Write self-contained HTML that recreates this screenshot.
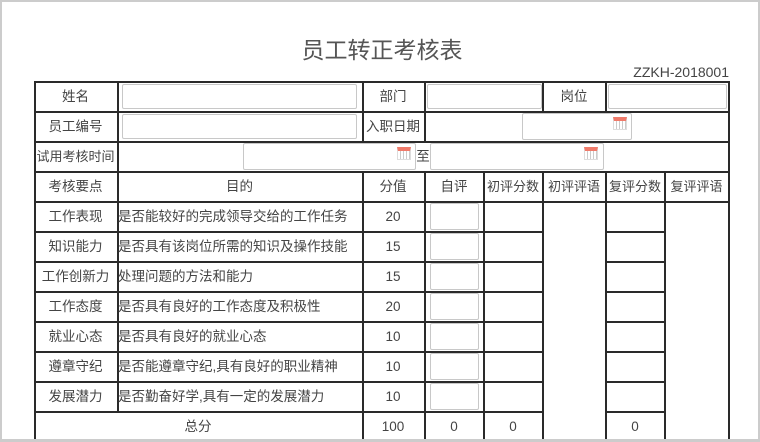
<!DOCTYPE html>
<html><head><meta charset="utf-8"><style>
*{margin:0;padding:0;box-sizing:border-box}
body{width:760px;height:441px;overflow:hidden;background:#ccc;font-family:"Liberation Sans","Noto Sans CJK SC",sans-serif;color:#444;position:relative}
#pg{position:absolute;left:2px;top:2px;width:756px;height:437px;background:#fff}
.h,.v{position:absolute;background:#2a2a2a}
.h{height:1.5px}.v{width:1.5px}
.t{position:absolute;font-size:13.5px;line-height:30px;height:30px;padding-top:1px;text-align:center;white-space:nowrap}
.l{text-align:left}
.in{position:absolute;border:1.5px solid #c8c8c8;border-radius:2px;background:#fff}
.cal{position:absolute;width:14px;height:13px;border:1px solid #ddd;border-top:4px solid #f07a6a;background:repeating-linear-gradient(90deg,#fff 0 2px,#ccc 2px 3px)}
</style></head><body><div id="pg"></div>
<div class="t" style="left:230px;top:32px;width:304px;font-size:23px;line-height:34px;height:34px;color:#555">员工转正考核表</div>
<div class="t" style="left:580px;top:61px;width:149px;text-align:right;font-size:14px;line-height:22px;padding:0">ZZKH-2018001</div>

<div class="h" style="left:34px;top:81px;width:696px"></div>
<div class="h" style="left:34px;top:111px;width:696px"></div>
<div class="h" style="left:34px;top:141px;width:696px"></div>
<div class="h" style="left:34px;top:171px;width:696px"></div>
<div class="h" style="left:34px;top:201px;width:696px"></div>
<div class="h" style="left:34px;top:231px;width:509px"></div><div class="h" style="left:606px;top:231px;width:59px"></div>
<div class="h" style="left:34px;top:261px;width:509px"></div><div class="h" style="left:606px;top:261px;width:59px"></div>
<div class="h" style="left:34px;top:291px;width:509px"></div><div class="h" style="left:606px;top:291px;width:59px"></div>
<div class="h" style="left:34px;top:321px;width:509px"></div><div class="h" style="left:606px;top:321px;width:59px"></div>
<div class="h" style="left:34px;top:351px;width:509px"></div><div class="h" style="left:606px;top:351px;width:59px"></div>
<div class="h" style="left:34px;top:381px;width:509px"></div><div class="h" style="left:606px;top:381px;width:59px"></div>
<div class="h" style="left:34px;top:411px;width:509px"></div><div class="h" style="left:606px;top:411px;width:59px"></div>
<div class="v" style="left:34px;top:81px;height:360px"></div>
<div class="v" style="left:728px;top:81px;height:360px"></div>
<div class="v" style="left:117px;top:81px;height:330px"></div>
<div class="v" style="left:362px;top:81px;height:60px"></div>
<div class="v" style="left:362px;top:171px;height:270px"></div>
<div class="v" style="left:424px;top:81px;height:60px"></div>
<div class="v" style="left:424px;top:171px;height:270px"></div>
<div class="v" style="left:542px;top:81px;height:30px"></div>
<div class="v" style="left:605px;top:81px;height:30px"></div>
<div class="v" style="left:483px;top:171px;height:270px"></div>
<div class="v" style="left:542px;top:171px;height:270px"></div>
<div class="v" style="left:605px;top:171px;height:270px"></div>
<div class="v" style="left:664px;top:171px;height:270px"></div>

<div class="t" style="left:34px;top:81px;width:83px">姓名</div>
<div class="in" style="left:122px;top:84px;width:235px;height:25px"></div>
<div class="t" style="left:362px;top:81px;width:62px">部门</div>
<div class="in" style="left:427px;top:84px;width:115px;height:25px"></div>
<div class="t" style="left:543px;top:81px;width:62px">岗位</div>
<div class="in" style="left:608px;top:84px;width:119px;height:25px"></div>
<div class="t" style="left:34px;top:111px;width:83px">员工编号</div>
<div class="in" style="left:122px;top:114px;width:235px;height:25px"></div>
<div class="t" style="left:362px;top:111px;width:62px">入职日期</div>
<div class="in" style="left:522px;top:113px;width:110px;height:27px"></div>
<div class="cal" style="left:613px;top:117px"></div>
<div class="t" style="left:34px;top:141px;width:83px;font-size:13px">试用考核时间</div>
<div class="in" style="left:243px;top:143px;width:173px;height:27px"></div>
<div class="cal" style="left:397px;top:147px"></div>
<div class="t" style="left:416px;top:141px;width:14px">至</div>
<div class="in" style="left:430px;top:143px;width:174px;height:27px"></div>
<div class="cal" style="left:584px;top:147px"></div>
<div class="t" style="left:34px;top:171px;width:83px">考核要点</div>
<div class="t" style="left:117px;top:171px;width:245px">目的</div>
<div class="t" style="left:362px;top:171px;width:62px">分值</div>
<div class="t" style="left:425px;top:171px;width:58px">自评</div>
<div class="t" style="left:484px;top:171px;width:58px;font-size:13px">初评分数</div>
<div class="t" style="left:543px;top:171px;width:62px;font-size:13px">初评评语</div>
<div class="t" style="left:606px;top:171px;width:58px;font-size:13px">复评分数</div>
<div class="t" style="left:665px;top:171px;width:63px;font-size:13px">复评评语</div>
<div class="t" style="left:34px;top:201px;width:83px">工作表现</div><div class="t l" style="left:118px;top:201px">是否能较好的完成领导交给的工作任务</div><div class="t" style="left:362px;top:201px;width:62px">20</div>
<div class="t" style="left:34px;top:231px;width:83px">知识能力</div><div class="t l" style="left:118px;top:231px">是否具有该岗位所需的知识及操作技能</div><div class="t" style="left:362px;top:231px;width:62px">15</div>
<div class="t" style="left:34px;top:261px;width:83px">工作创新力</div><div class="t l" style="left:118px;top:261px">处理问题的方法和能力</div><div class="t" style="left:362px;top:261px;width:62px">15</div>
<div class="t" style="left:34px;top:291px;width:83px">工作态度</div><div class="t l" style="left:118px;top:291px">是否具有良好的工作态度及积极性</div><div class="t" style="left:362px;top:291px;width:62px">20</div>
<div class="t" style="left:34px;top:321px;width:83px">就业心态</div><div class="t l" style="left:118px;top:321px">是否具有良好的就业心态</div><div class="t" style="left:362px;top:321px;width:62px">10</div>
<div class="t" style="left:34px;top:351px;width:83px">遵章守纪</div><div class="t l" style="left:118px;top:351px">是否能遵章守纪,具有良好的职业精神</div><div class="t" style="left:362px;top:351px;width:62px">10</div>
<div class="t" style="left:34px;top:381px;width:83px">发展潜力</div><div class="t l" style="left:118px;top:381px">是否勤奋好学,具有一定的发展潜力</div><div class="t" style="left:362px;top:381px;width:62px">10</div>
<div class="in" style="left:430px;top:203px;width:49px;height:27px"></div>
<div class="in" style="left:430px;top:233px;width:49px;height:27px"></div>
<div class="in" style="left:430px;top:263px;width:49px;height:27px"></div>
<div class="in" style="left:430px;top:293px;width:49px;height:27px"></div>
<div class="in" style="left:430px;top:323px;width:49px;height:27px"></div>
<div class="in" style="left:430px;top:353px;width:49px;height:27px"></div>
<div class="in" style="left:430px;top:383px;width:49px;height:27px"></div>
<div class="t" style="left:34px;top:411px;width:328px">总分</div>
<div class="t" style="left:362px;top:411px;width:62px">100</div>
<div class="t" style="left:425px;top:411px;width:58px">0</div>
<div class="t" style="left:484px;top:411px;width:58px">0</div>
<div class="t" style="left:606px;top:411px;width:58px">0</div>
<div style="position:absolute;left:0;top:439px;width:760px;height:2px;background:#ccc"></div>
</body></html>
